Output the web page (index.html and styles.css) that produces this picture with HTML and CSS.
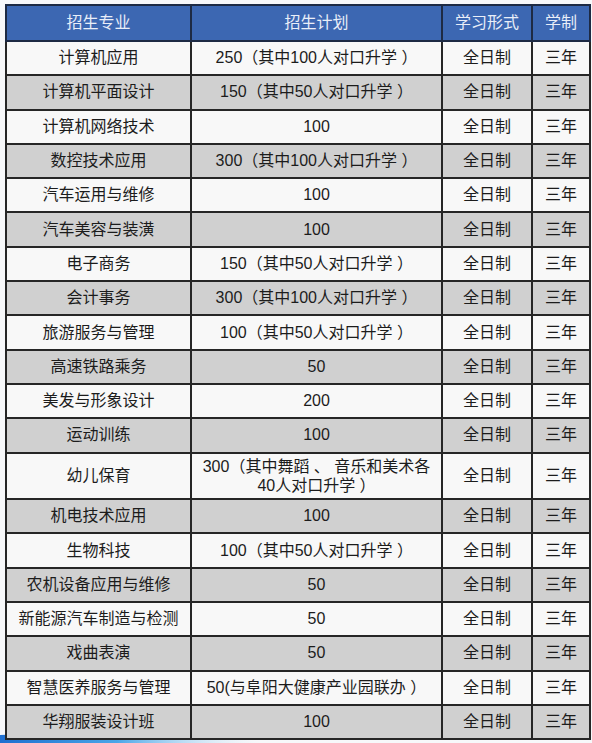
FILE: index.html
```html
<!DOCTYPE html>
<html lang="zh-CN">
<head>
<meta charset="utf-8">
<title>招生计划</title>
<link rel="stylesheet" href="styles.css">
</head>
<body>
<div class="page">
  <svg class="swoosh" width="260" height="12" viewBox="0 0 260 12" aria-hidden="true">
    <defs>
      <linearGradient id="sw" x1="0" y1="0" x2="1" y2="0">
        <stop offset="0" stop-color="#1f6fd0"/>
        <stop offset="0.45" stop-color="#4aa6e8"/>
        <stop offset="1" stop-color="#cfe8f8" stop-opacity="0"/>
      </linearGradient>
    </defs>
    <path d="M0 4 C60 2 140 3 260 10 L260 12 L0 12 Z" fill="url(#sw)"/>
  </svg>
  <table class="plan">
    <colgroup>
      <col class="c1"><col class="c2"><col class="c3"><col class="c4">
    </colgroup>
    <thead>
      <tr><th>招生专业</th><th>招生计划</th><th>学习形式</th><th>学制</th></tr>
    </thead>
    <tbody>
      <tr><td>计算机应用</td><td>250（其中100人对口升学 ）</td><td>全日制</td><td>三年</td></tr>
      <tr><td>计算机平面设计</td><td>150（其中50人对口升学 ）</td><td>全日制</td><td>三年</td></tr>
      <tr><td>计算机网络技术</td><td>100</td><td>全日制</td><td>三年</td></tr>
      <tr><td>数控技术应用</td><td>300（其中100人对口升学 ）</td><td>全日制</td><td>三年</td></tr>
      <tr><td>汽车运用与维修</td><td>100</td><td>全日制</td><td>三年</td></tr>
      <tr><td>汽车美容与装潢</td><td>100</td><td>全日制</td><td>三年</td></tr>
      <tr><td>电子商务</td><td>150（其中50人对口升学 ）</td><td>全日制</td><td>三年</td></tr>
      <tr><td>会计事务</td><td>300（其中100人对口升学 ）</td><td>全日制</td><td>三年</td></tr>
      <tr><td>旅游服务与管理</td><td>100（其中50人对口升学 ）</td><td>全日制</td><td>三年</td></tr>
      <tr><td>高速铁路乘务</td><td>50</td><td>全日制</td><td>三年</td></tr>
      <tr><td>美发与形象设计</td><td>200</td><td>全日制</td><td>三年</td></tr>
      <tr><td>运动训练</td><td>100</td><td>全日制</td><td>三年</td></tr>
      <tr class="tall"><td>幼儿保育</td><td class="two">300（其中舞蹈 、 音乐和美术各<br>40人对口升学 ）</td><td>全日制</td><td>三年</td></tr>
      <tr><td>机电技术应用</td><td>100</td><td>全日制</td><td>三年</td></tr>
      <tr><td>生物科技</td><td>100（其中50人对口升学 ）</td><td>全日制</td><td>三年</td></tr>
      <tr><td>农机设备应用与维修</td><td>50</td><td>全日制</td><td>三年</td></tr>
      <tr><td>新能源汽车制造与检测</td><td>50</td><td>全日制</td><td>三年</td></tr>
      <tr><td>戏曲表演</td><td>50</td><td>全日制</td><td>三年</td></tr>
      <tr><td>智慧医养服务与管理</td><td>50(与阜阳大健康产业园联办 ）</td><td>全日制</td><td>三年</td></tr>
      <tr><td>华翔服装设计班</td><td>100</td><td>全日制</td><td>三年</td></tr>
    </tbody>
  </table>
</div>
</body>
</html>
```

FILE: styles.css
```css
html, body {
  margin: 0;
  padding: 0;
  background: #f7f8fa;
}

.page {
  position: relative;
  width: 592px;
  height: 743px;
  padding: 4px 0 0 5px;
  box-sizing: border-box;
  overflow: hidden;
  font-family: "Liberation Sans", "Noto Sans CJK SC", sans-serif;
}

.swoosh {
  position: absolute;
  left: 0;
  bottom: 0;
}

.plan {
  position: relative;
  table-layout: fixed;
  border-collapse: collapse;
  width: 584px;
  font-size: 16px;
  color: #1c1c1c;
}

.c1 { width: 185px; }
.c2 { width: 251px; }
.c3 { width: 90px; }
.c4 { width: 58px; }

.plan th,
.plan td {
  border: 2px solid #262626;
  padding: 0;
  text-align: center;
  vertical-align: middle;
  white-space: nowrap;
  line-height: 20px;
}

.plan th {
  height: 34px;
  background: #3c67b2;
  color: #e9eef8;
  font-weight: normal;
  border-color: #1d2a44;
}

.plan td {
  height: 32.3px;
}

.plan tbody tr:nth-child(odd) td {
  background: #f8f8f8;
}

.plan tbody tr:nth-child(even) td {
  background: #d0d0d0;
}

.plan tr.tall td {
  height: 44.6px;
}

.plan td.two {
  line-height: 19px;
}
```
